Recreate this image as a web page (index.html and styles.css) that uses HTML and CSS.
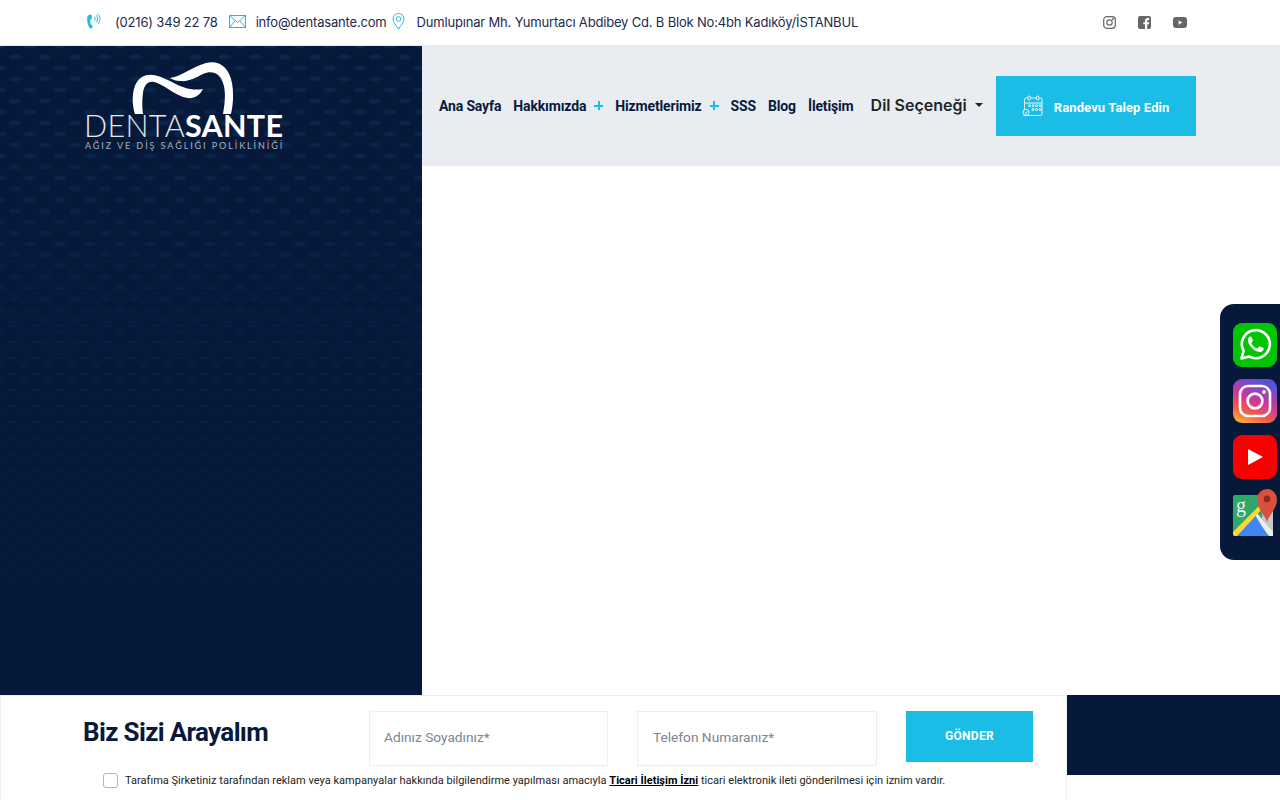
FILE: index.html
```html
<!DOCTYPE html>
<html lang="tr">

<head>
    <meta charset="UTF-8">
    <meta name="viewport" content="width=device-width, initial-scale=1.0">
    <title>DentaSante Ağız ve Diş Sağlığı Polikliniği</title>
    <link rel="stylesheet" href="styles.css">
</head>

<body>
    <!-- Top bar -->
    <div class="topbar">
        <div class="contact-list">
            <a class="contact-item contact-phone">
                <svg class="contact-icon" width="15" height="17" viewBox="0 0 15 17" fill="none">
                    <path d="M3.6 1.6 L1.5 3 C0.6 6.5 1.2 11.5 3.8 15.3 L6 15.4 L6.6 12.6 L4.9 11.5 C4.3 9.7 4.2 8 4.4 6.6 L6 5.6 L5.6 2 Z" fill="#1bbde6"/>
                    <path d="M8.2 3.6 C9.4 4.6 9.4 6.6 8.4 7.8 M10 2 C12 3.8 12 7.8 10.2 9.4 M11.8 0.6 C14.6 3.2 14.4 8.6 12 11" stroke="#1bbde6" stroke-width="1"/>
                </svg>
                <span>(0216) 349 22 78</span>
            </a>
            <a class="contact-item contact-mail">
                <svg class="contact-icon" width="17" height="13" viewBox="0 0 17 13" fill="none" stroke="#1bbde6">
                    <rect x="0.5" y="0.5" width="16" height="12"/>
                    <path d="M0.5 0.5 L8.5 7.5 L16.5 0.5 M0.5 12.5 L6 6 M16.5 12.5 L11 6"/>
                </svg>
                <span>info@dentasante.com</span>
            </a>
            <a class="contact-item contact-address">
                <svg class="contact-icon" width="13" height="17" viewBox="0 0 13 17" fill="none" stroke="#1bbde6">
                    <path d="M6.5 16.2 C4.5 12.5 1 9.5 1 6 A5.5 5.5 0 0 1 12 6 C12 9.5 8.5 12.5 6.5 16.2 Z"/>
                    <circle cx="6.5" cy="6" r="2.4"/>
                </svg>
                <span>Dumlupınar Mh. Yumurtacı Abdibey Cd. B Blok No:4bh Kadıköy/İSTANBUL</span>
            </a>
        </div>
        <div class="social-list">
            <a>
                <svg width="13" height="13" viewBox="0 0 13 13" fill="none" stroke="#666" stroke-width="1.2">
                    <rect x="0.7" y="0.7" width="11.6" height="11.6" rx="3"/>
                    <circle cx="6.5" cy="6.5" r="2.7"/>
                    <circle cx="9.9" cy="3.1" r="0.4"/>
                </svg>
            </a>
            <a>
                <svg width="13" height="13" viewBox="0 0 13 13">
                    <path d="M2 0 H11 A2 2 0 0 1 13 2 V11 A2 2 0 0 1 11 13 H9.2 V8.2 H10.9 L11.2 6.2 H9.2 V5 C9.2 4.3 9.5 3.9 10.3 3.9 H11.3 V2.2 C10.8 2.1 10.2 2.1 9.7 2.1 C8.1 2.1 7 3 7 4.8 V6.2 H5.3 V8.2 H7 V13 H2 A2 2 0 0 1 0 11 V2 A2 2 0 0 1 2 0 Z" fill="#666"/>
                </svg>
            </a>
            <a>
                <svg width="14" height="11" viewBox="0 0 14 11">
                    <rect width="14" height="11" rx="3" fill="#666"/>
                    <path d="M5.6 3.2 L9.4 5.5 L5.6 7.8 Z" fill="#fff"/>
                </svg>
            </a>
        </div>
    </div>

    <!-- Logo panel and menu -->
    <div class="hero">
        <div class="hero-left">
            <div class="hero-dots hero-dots-large"></div>
            <div class="hero-dots hero-dots-small"></div>
            <a class="logo">
                <svg class="logo-mark" width="104" height="53" viewBox="131 60 104 53">
                    <path d="M135 113 C131 100 132 82 142 76 C150 71 160 75 172 81 C183 87 192 90 203 88 C199 96 192 99 183 96 C172 92 163 83 154 81 C147 80 144 85 143 92 C142 99 142 106 143 113 Z" fill="#fff"/>
                    <path d="M170 77 C182 75 192 66 206 62 C219 59 229 66 232 82 C234 93 233 104 231 113 H223 C225 102 226 90 223 82 C220 72 212 69 203 73 C195 77 188 81 180 80 C176 80 173 79 170 77 Z" fill="#fff"/>
                </svg>
                <span class="logo-name">DENTA<b>SANTE</b></span>
                <span class="logo-sub">AĞIZ VE DİŞ SAĞLIĞI POLİKLİNİĞİ</span>
            </a>
        </div>
        <div class="hero-right">
            <nav class="menu">
                <a class="menu-link">Ana Sayfa</a>
                <a class="menu-link has-sub">Hakkımızda</a>
                <a class="menu-link has-sub">Hizmetlerimiz</a>
                <a class="menu-link">SSS</a>
                <a class="menu-link">Blog</a>
                <a class="menu-link">İletişim</a>
                <a class="lang-toggle">Dil Seçeneği</a>
                <a class="appointment-btn">
                    <svg width="22" height="22" viewBox="0 0 22 22" fill="none" stroke="#fff" stroke-width="0.9">
                        <path d="M4 3 H18.5 A1.5 1.5 0 0 1 20 4.5 V19 A1.5 1.5 0 0 1 18.5 20.5 H1.5"/>
                        <path d="M4 3 A1.5 1.5 0 0 0 2.5 4.5 V15"/>
                        <path d="M2.5 8 H20"/>
                        <rect x="6" y="1" width="2.4" height="4" rx="1.2" fill="#1bbde6"/>
                        <rect x="14.5" y="1" width="2.4" height="4" rx="1.2" fill="#1bbde6"/>
                        <circle cx="7.5" cy="10.7" r="1"/>
                        <circle cx="11" cy="10.7" r="1"/>
                        <circle cx="14.5" cy="10.7" r="1"/>
                        <circle cx="18" cy="10.7" r="1"/>
                        <circle cx="11" cy="14.5" r="1"/>
                        <circle cx="14.5" cy="14.5" r="1"/>
                        <circle cx="18" cy="14.5" r="1"/>
                        <circle cx="4" cy="17.3" r="3" fill="#1bbde6"/>
                        <path d="M2.7 17.3 L3.8 18.4 L5.5 16.4"/>
                    </svg>
                    <span>Randevu Talep Edin</span>
                </a>
            </nav>
        </div>
    </div>

    <!-- Callback form -->
    <div class="callback">
        <form class="callback-form">
            <div class="callback-row">
                <h2 class="callback-title">Biz Sizi Arayalım</h2>
                <input class="callback-input callback-name" type="text" placeholder="Adınız Soyadınız*">
                <input class="callback-input callback-phone" type="text" placeholder="Telefon Numaranız*">
                <button class="callback-submit" type="button">GÖNDER</button>
            </div>
            <label class="consent">
                <input type="checkbox">
                <span>Tarafıma Şirketiniz tarafından reklam veya kampanyalar hakkında bilgilendirme yapılması amacıyla <a>Ticari İletişim İzni</a> ticari elektronik ileti gönderilmesi için iznim vardır.</span>
            </label>
        </form>
        <div class="callback-side"></div>
    </div>

    <!-- Floating social links -->
    <div class="float-social">
        <a>
            <svg width="44" height="44" viewBox="0 0 44 44">
                <rect width="44" height="44" rx="9" fill="#03c403"/>
                <path d="M8.5 35.5 L10.6 28 A14 14 0 1 1 16 33.4 Z" fill="none" stroke="#fff" stroke-width="2.6" stroke-linejoin="round"/>
                <path d="M16.6 13.8 C15 15 14.6 17 15.4 19.4 C16.8 23.4 20.4 27 24.6 28.6 C27 29.4 29 28.8 30.2 27.2 C30.8 26.2 30.8 25.4 30.4 25 L27.2 23.4 C26.6 23.2 26.2 23.4 25.8 23.8 L24.8 25 C24.4 25.4 24 25.4 23.6 25.2 C21.2 24.2 19.6 22.6 18.6 20.4 C18.4 20 18.6 19.6 18.8 19.2 L19.6 18.2 C20 17.8 20 17.4 19.8 17 L18.4 14 C18 13.2 17.2 13.4 16.6 13.8 Z" fill="#fff"/>
            </svg>
        </a>
        <a>
            <svg width="44" height="44" viewBox="0 0 44 44">
                <defs>
                    <linearGradient id="insta-bg" x1="0.1" y1="1" x2="0.5" y2="0">
                        <stop offset="0" stop-color="#fdb53a"/>
                        <stop offset="0.3" stop-color="#ef5a4a"/>
                        <stop offset="0.6" stop-color="#c9379d"/>
                        <stop offset="1" stop-color="#5b51d8"/>
                    </linearGradient>
                </defs>
                <rect width="44" height="44" rx="9" fill="url(#insta-bg)"/>
                <rect x="7" y="7" width="30" height="30" rx="8" fill="none" stroke="#fff" stroke-width="2.6"/>
                <circle cx="22" cy="22" r="7.4" fill="none" stroke="#fff" stroke-width="2.6"/>
                <circle cx="31" cy="13" r="1.9" fill="#fff"/>
            </svg>
        </a>
        <a>
            <svg width="44" height="44" viewBox="0 0 44 44">
                <rect width="44" height="44" rx="9" fill="#f70000"/>
                <path d="M15 14 L30 22 L15 30 Z" fill="#fff"/>
            </svg>
        </a>
        <a class="float-maps">
            <svg width="44" height="48" viewBox="0 0 44 48">
                <path d="M0 8 A2 2 0 0 1 2 6 H40 V45 A2 2 0 0 1 38 47 H2 A2 2 0 0 1 0 45 Z" fill="#2fa868"/>
                <path d="M22 22 L40 42 V47 H36 L19 25 Z" fill="#ececec"/>
                <path d="M30 16 H40 V42 L29 30 Z" fill="#c8c8c8"/>
                <path d="M2 47 L21 24.5 L35 47 Z" fill="#4285f4"/>
                <path d="M0 43 L27 16 L30 19 L4 47 H2 A2 2 0 0 1 0 45 Z" fill="#fdd835"/>
                <text class="maps-g" x="3" y="23">g</text>
                <path d="M34 33 C32 26 24 20 24 10 A10 10 0 0 1 44 10 C44 20 36 26 34 33 Z" fill="#d9503f"/>
                <circle cx="34" cy="10" r="3.4" fill="#8c2a22"/>
            </svg>
        </a>
    </div>
</body>

</html>
```
FILE: styles.css
```css
body {
    margin: 0;
    height: 800px;
    overflow: hidden;
    position: relative;
    background-color: #fff;
    font-family: Roboto, Arial, sans-serif;
    color: #071a3b;
}

a {
    color: inherit;
    text-decoration: none;
}

.topbar {
    height: 45px;
    box-sizing: content-box;
    border-bottom: 1px solid #e8e8e8;
    display: flex;
    justify-content: space-between;
    align-items: center;
    padding: 0 93px 0 86px;
    font-family: Inter, Arial, sans-serif;
    font-size: 13px;
    letter-spacing: -0.18px;
}

.contact-list {
    display: flex;
    align-items: center;
    margin-bottom: 2px;
}

.contact-item {
    display: flex;
    align-items: center;
    color: #1c2a4c;
}

.contact-phone span {
    margin-left: 14px;
}

.contact-mail {
    margin-left: 11px;
}

.contact-mail span {
    margin-left: 10px;
}

.contact-address {
    margin-left: 5px;
}

.contact-address span {
    margin-left: 12px;
}

.social-list {
    display: flex;
    align-items: center;
    gap: 22px;
}

.social-list a {
    display: flex;
}

.hero {
    display: flex;
    height: 649px;
}

.hero-left {
    width: 422px;
    background-color: #07193b;
    position: relative;
    overflow: hidden;
}

.hero-dots {
    position: absolute;
    inset: 0;
}

.hero-dots-large {
    background-image:
        radial-gradient(ellipse 7px 3px at center, #0b2b4e 70%, transparent 100%),
        radial-gradient(ellipse 7px 3px at center, #0b2b4e 70%, transparent 100%);
    background-size: 30px 22px;
    background-position: 0 0, 15px 11px;
    -webkit-mask-image: linear-gradient(to bottom, rgba(0, 0, 0, 0.8), rgba(0, 0, 0, 0.5) 30%, transparent 50%);
    mask-image: linear-gradient(to bottom, rgba(0, 0, 0, 0.8), rgba(0, 0, 0, 0.5) 30%, transparent 50%);
}

.hero-dots-small {
    background-image:
        radial-gradient(ellipse 4px 1.5px at center, #0b2b4e 70%, transparent 100%),
        radial-gradient(ellipse 4px 1.5px at center, #0b2b4e 70%, transparent 100%);
    background-size: 24px 16px;
    background-position: 0 0, 12px 8px;
    -webkit-mask-image: linear-gradient(to bottom, transparent 25%, rgba(0, 0, 0, 0.5) 50%, transparent 85%);
    mask-image: linear-gradient(to bottom, transparent 25%, rgba(0, 0, 0, 0.5) 50%, transparent 85%);
}

.logo {
    position: relative;
    display: flex;
    flex-direction: column;
    align-items: flex-start;
    width: 200px;
    margin: 15px 0 0 85px;
    color: #fff;
}

.logo-mark {
    margin-left: 46px;
    display: block;
}

.logo-name {
    font-family: Lato, Arial, sans-serif;
    font-size: 30.5px;
    font-weight: 300;
    line-height: 24px;
    letter-spacing: 0.3px;
    margin: -1px 0 0 -1px;
    white-space: nowrap;
    color: #e4e6ea;
}

.logo-name b {
    font-weight: 700;
    color: #fff;
}

.logo-sub {
    font-family: Lato, Arial, sans-serif;
    font-size: 9px;
    line-height: 12px;
    letter-spacing: 1.92px;
    white-space: nowrap;
    color: #aab0ba;
    margin-top: 3px;
}

.hero-right {
    flex: 1;
}

.menu {
    height: 120px;
    background-color: #e9ecf1;
    display: flex;
    align-items: center;
    padding-left: 17px;
}

.menu-link {
    font-size: 14px;
    font-weight: 700;
    letter-spacing: -0.15px;
    margin-right: 12px;
    white-space: nowrap;
}

/* plus sign drawn with two bars, the glyph came out too thin */
.menu-link.has-sub::after {
    content: "";
    display: inline-block;
    width: 9px;
    height: 9px;
    margin-left: 8px;
    vertical-align: 1px;
    background-image:
        linear-gradient(#1bbde6, #1bbde6),
        linear-gradient(#1bbde6, #1bbde6);
    background-size: 9px 2px, 2px 9px;
    background-position: center;
    background-repeat: no-repeat;
}

.lang-toggle {
    font-family: Inter, Arial, sans-serif;
    font-size: 16px;
    font-weight: 600;
    color: #212529;
    margin: 0 0 2px 5px;
    display: flex;
    align-items: center;
    white-space: nowrap;
}

.lang-toggle::after {
    content: "";
    margin-left: 8px;
    border-top: 4px solid #212529;
    border-left: 4px solid transparent;
    border-right: 4px solid transparent;
}

.appointment-btn {
    width: 200px;
    height: 60px;
    margin-left: 13px;
    background-color: #1bbde6;
    color: #fff;
    display: flex;
    align-items: center;
    justify-content: center;
    gap: 10px;
    font-size: 13px;
    font-weight: 700;
    letter-spacing: 0.1px;
    white-space: nowrap;
}

.appointment-btn span {
    margin-top: 2px;
}

.callback {
    display: flex;
    align-items: flex-start;
    height: 105px;
}

.callback-form {
    width: 1067px;
    height: 105px;
    box-sizing: border-box;
    border: 1px solid #eee;
    border-bottom: none;
    padding: 15px 0 0 82px;
    background-color: #fff;
}

.callback-row {
    display: flex;
    align-items: flex-start;
}

.callback-title {
    width: 286px;
    margin: 3px 0 0;
    font-size: 26px;
    font-weight: 700;
    letter-spacing: -0.65px;
    line-height: 36px;
    white-space: nowrap;
}

.callback-input {
    width: 240px;
    height: 55px;
    box-sizing: border-box;
    border: 1px solid #eee;
    padding: 0 15px 3px;
    font-family: Roboto, Arial, sans-serif;
    font-size: 13.7px;
    color: #6c757d;
}

.callback-input::placeholder {
    color: #7d848c;
}

.callback-name {
    width: 239px;
    padding-left: 14px;
}

.callback-phone {
    margin-left: 29px;
}

.callback-submit {
    width: 127px;
    height: 51px;
    margin-left: 29px;
    padding-bottom: 2px;
    border: none;
    background-color: #1bbde6;
    color: #fff;
    font-family: Roboto, Arial, sans-serif;
    font-size: 12px;
    font-weight: 700;
    letter-spacing: 0.3px;
    cursor: pointer;
}

.consent {
    display: flex;
    align-items: center;
    margin: 5px 0 0 20px;
    font-size: 11px;
    letter-spacing: 0.025px;
    line-height: 16px;
    color: #222;
    white-space: nowrap;
}

.consent span {
    padding-top: 2px;
}

.consent input {
    appearance: none;
    width: 15px;
    height: 15px;
    margin: 0 7px 0 0;
    background-color: #fff;
    border: 1px solid #b5b5b5;
    border-radius: 3px;
}

.consent a {
    font-weight: 700;
    color: #000;
    text-decoration: underline;
}

.callback-side {
    flex: 1;
    height: 80px;
    background-color: #07193b;
}

.float-social {
    position: absolute;
    top: 304px;
    right: 0;
    width: 47px;
    height: 256px;
    padding-left: 13px;
    background-color: #07193b;
    border-radius: 14px 0 0 14px;
    display: flex;
    flex-direction: column;
    align-items: flex-start;
    box-sizing: content-box;
}

.float-social a {
    display: flex;
    margin-top: 12px;
}

.float-social a:first-child {
    margin-top: 19px;
}

.float-maps {
    margin-top: 10px !important;
}

.maps-g {
    font-family: "Liberation Serif", serif;
    font-size: 20px;
    fill: #e8f5ec;
}
```
